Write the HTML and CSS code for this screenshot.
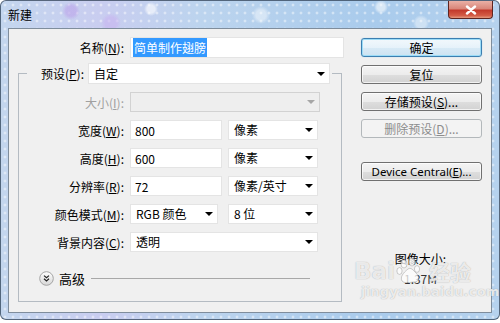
FILE: index.html
```html
<!DOCTYPE html>
<html lang="zh-CN">
<head>
    <meta charset="UTF-8">
    <title>新建</title>
    <link rel="stylesheet" href="styles.css">
</head>
<body>
    <div class="window">
        <div class="titlebar">
            <span class="title">新建</span>
            <div class="close">
                <svg width="12" height="10" viewBox="0 0 12 10">
                    <path d="M2 1.5 L10 8.5 M10 1.5 L2 8.5" stroke="#fff" stroke-width="2.4" stroke-linecap="round"/>
                </svg>
            </div>
        </div>

        <div class="client">
            <div class="main">
                <div class="name-row">
                    <label>名称(<u>N</u>):</label>
                    <div class="field"><span class="sel">简单制作翅膀</span></div>
                </div>

                <fieldset class="group">
                    <legend class="preset">
                        <label>预设(<u>P</u>):</label>
                        <div class="combo preset-combo">自定</div>
                    </legend>

                    <div class="rows">
                        <label class="off">大小(<u>I</u>):</label>
                        <div class="combo off size-combo"></div>

                        <label>宽度(<u>W</u>):</label>
                        <div class="pair">
                            <div class="field short">800</div>
                            <div class="combo unit">像素</div>
                        </div>

                        <label>高度(<u>H</u>):</label>
                        <div class="pair">
                            <div class="field short">600</div>
                            <div class="combo unit">像素</div>
                        </div>

                        <label>分辨率(<u>R</u>):</label>
                        <div class="pair">
                            <div class="field short">72</div>
                            <div class="combo unit">像素/英寸</div>
                        </div>

                        <label>颜色模式(<u>M</u>):</label>
                        <div class="pair">
                            <div class="combo mode">RGB 颜色</div>
                            <div class="combo unit">8 位</div>
                        </div>

                        <label>背景内容(<u>C</u>):</label>
                        <div class="combo">透明</div>
                    </div>

                    <div class="advanced">
                        <svg class="expand" width="15" height="15" viewBox="0 0 15 15">
                            <defs>
                                <linearGradient id="eg" x1="0" y1="0" x2="0" y2="1">
                                    <stop offset="0" stop-color="#ffffff"/>
                                    <stop offset="1" stop-color="#d6d6d6"/>
                                </linearGradient>
                            </defs>
                            <circle cx="7.5" cy="7.5" r="6.8" fill="url(#eg)" stroke="#a4a4a4"/>
                            <path d="M5 4.6 L7.5 6.8 L10 4.6 M5 7.8 L7.5 10 L10 7.8" fill="none" stroke="#222" stroke-width="1.2"/>
                        </svg>
                        <span>高级</span>
                        <span class="rule"></span>
                    </div>
                </fieldset>
            </div>

            <div class="side">
                <button class="btn default">确定</button>
                <button class="btn">复位</button>
                <button class="btn">存储预设(<u>S</u>)...</button>
                <button class="btn" disabled>删除预设(<u>D</u>)...</button>
                <button class="btn device">Device Central(<u>E</u>)...</button>
                <div class="size-info">
                    <div>图像大小:</div>
                    <div class="size-value">1.37M</div>
                </div>
            </div>

            <div class="watermark">
                <div class="wm-logo">
                    <span>Bai</span>
                    <svg width="30" height="26" viewBox="0 0 30 26">
                        <g fill="rgba(255,255,255,0.75)" stroke="rgba(120,120,120,0.45)" stroke-width="0.8">
                            <ellipse cx="8" cy="6" rx="3" ry="4"/>
                            <ellipse cx="16" cy="4" rx="3" ry="4"/>
                            <ellipse cx="3.5" cy="13" rx="2.6" ry="3.4"/>
                            <ellipse cx="21" cy="11" rx="2.6" ry="3.4"/>
                            <path d="M12 11 C7 15 4 19 6 23 C9 26 15 24 18 24 C23 24 24 19 20 15 C17 12 15 9 12 11 Z"/>
                        </g>
                    </svg>
                    <span class="wm-cn">经验</span>
                </div>
                <div class="wm-url">jingyan.baidu.com</div>
            </div>
        </div>
    </div>
</body>
</html>
```

FILE: styles.css
```css
body {
    margin: 0;
    background: #ffffff;
    font-family: "Noto Sans CJK SC", "Noto Sans", sans-serif;
    font-size: 12px;
    color: #000;
}

.window {
    width: 500px;
    height: 320px;
    box-sizing: border-box;
    border: 1px solid rgba(40, 55, 75, 0.7);
    border-radius: 6px;
    padding: 0 7px 6px 7px;
    display: flex;
    flex-direction: column;
    background:
        radial-gradient(circle at 70px 10px, rgba(190, 170, 235, 0.7) 0 5px, transparent 9px),
        radial-gradient(circle at 110px 22px, rgba(200, 180, 240, 0.6) 0 6px, transparent 10px),
        radial-gradient(circle at 150px 8px, rgba(255, 255, 255, 0.6) 0 4px, transparent 7px),
        radial-gradient(circle at 260px 14px, rgba(255, 255, 255, 0.45) 0 5px, transparent 9px),
        radial-gradient(circle at 380px 6px, rgba(255, 255, 255, 0.55) 0 4px, transparent 7px),
        radial-gradient(circle at 420px 22px, rgba(255, 255, 255, 0.4) 0 5px, transparent 8px),
        radial-gradient(rgba(255, 255, 255, 0.45) 1px, transparent 1.8px) 0 0 / 8px 8px,
        linear-gradient(90deg, #c3d6ee 0%, #c9cdf0 20%, #bcd4ee 40%, #a9cbec 75%, #b6d2ee 100%);
}

.titlebar {
    height: 27px;
    display: flex;
    align-items: flex-start;
}

.title {
    margin-top: 6px;
    line-height: 16px;
}

.close {
    margin-left: auto;
    margin-right: -1px;
    width: 45px;
    height: 18px;
    box-sizing: border-box;
    border: 1px solid #5e2520;
    border-top: none;
    border-radius: 0 0 4px 4px;
    background: linear-gradient(#eab1a6 0%, #d9877a 45%, #c33a2c 55%, #d35b45 85%, #e49a80 100%);
    display: flex;
    align-items: center;
    justify-content: center;
}

.client {
    flex: 1;
    position: relative;
    display: flex;
    gap: 19px;
    background: #f0f0f0;
    border: 1px solid #7f8d9c;
    padding-top: 8px;
}

.main {
    width: 333px;
    padding-left: 9px;
    box-sizing: border-box;
}

label {
    text-align: right;
    white-space: nowrap;
}

.name-row {
    display: grid;
    grid-template-columns: 106px 214px;
    column-gap: 6px;
    align-items: center;
    height: 21px;
    margin-bottom: 5px;
}

.field,
.combo {
    height: 20px;
    line-height: 20px;
    box-sizing: border-box;
    background: #fff;
    border: 1px solid #e4e4e4;
    padding-left: 4px;
    white-space: nowrap;
}

.name-row .field {
    height: 21px;
    line-height: 19px;
    padding-left: 2px;
}

.sel {
    background: #3399ff;
    color: #fff;
    padding: 1px 1px;
}

.combo {
    display: flex;
    align-items: center;
    padding-left: 5px;
    padding-right: 4px;
}

.combo::after {
    content: "";
    margin-left: auto;
    border-left: 4px solid transparent;
    border-right: 4px solid transparent;
    border-top: 4px solid #000;
}

.combo.off {
    background: #eeeeee;
    border-color: #d2d2d2;
}

.combo.off::after {
    border-top-color: #a6a6a6;
}

.off {
    color: #a0a0a0;
}

.group {
    margin: 0;
    padding: 0 0 15px 0;
    width: 324px;
    box-sizing: border-box;
    border: 1px solid #b4bbc2;
    min-width: 0;
}

.preset {
    display: flex;
    align-items: center;
    gap: 4px;
    margin-left: 8px;
    padding: 0 2px 0 0;
}

.preset label {
    width: 57px;
}

.preset-combo {
    width: 242px;
    height: 21px;
}

.rows {
    margin-top: 8px;
    display: grid;
    grid-template-columns: 105px 188px;
    column-gap: 6px;
    row-gap: 8px;
    align-items: center;
}

.size-combo {
    width: 190px;
}

.pair {
    display: flex;
    justify-content: space-between;
}

.short {
    width: 92px;
}

.unit {
    width: 90px;
}

.mode {
    width: 88px;
}

.advanced {
    display: flex;
    align-items: center;
    gap: 5px;
    margin: 19px 31px 0 20px;
    height: 15px;
}

.advanced span {
    font-size: 13px;
}

.advanced .rule {
    flex: 1;
    height: 0;
    border-top: 1px solid #a8a8a8;
    margin-left: 1px;
}

.side {
    width: 121px;
    display: flex;
    flex-direction: column;
    gap: 8px;
    padding-top: 1px;
}

.btn {
    height: 19px;
    padding: 0;
    font-family: inherit;
    font-size: 12px;
    color: #000;
    border: 1px solid #707070;
    border-radius: 3px;
    background: linear-gradient(#f4f4f4 0%, #ececec 50%, #dedede 51%, #d2d2d2 100%);
    box-shadow: inset 0 0 0 1px rgba(255, 255, 255, 0.7);
}

.btn.default {
    border-color: #3c7fb1;
    box-shadow: inset 0 0 0 1px #9cdcf7, 0 0 1px #7fc1e8;
    background: linear-gradient(#f2f8fc 0%, #e6f2fa 50%, #d8eaf6 51%, #cde3f2 100%);
}

.btn:disabled {
    color: #8d8d8d;
    border-color: #b3b8bb;
    background: #f3f3f3;
    box-shadow: none;
}

.btn.device {
    margin-top: 16px;
    font-family: "Noto Sans", sans-serif;
    font-size: 11.5px;
}

.size-info {
    margin-top: 62px;
    text-align: center;
    line-height: 16px;
    margin-right: 2px;
}

.size-value {
    margin-top: 4px;
    color: #333;
}

.watermark {
    position: absolute;
    left: 345px;
    top: 229px;
    color: rgba(255, 255, 255, 0.8);
    text-shadow: 0 0 1px rgba(90, 90, 90, 0.55);
}

.wm-logo {
    display: flex;
    align-items: center;
    gap: 1px;
    font-family: "DejaVu Sans", sans-serif;
    font-weight: bold;
    font-size: 23px;
    line-height: 26px;
}

.wm-cn {
    font-family: "Noto Sans CJK SC", sans-serif;
    font-size: 21px;
    margin-left: 2px;
}

.wm-url {
    font-family: "DejaVu Sans", sans-serif;
    font-weight: bold;
    font-size: 13px;
    letter-spacing: 0.2px;
    margin-top: 0;
    margin-left: 7px;
}
```
